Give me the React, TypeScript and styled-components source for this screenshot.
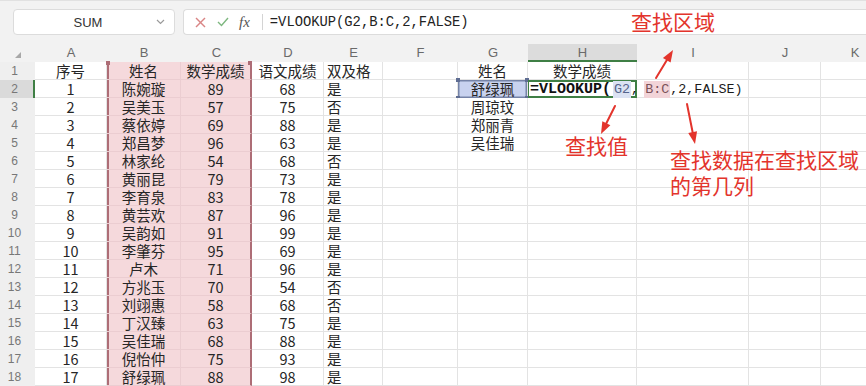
import React from "react";
import styled, { createGlobalStyle } from "styled-components";

const GlobalStyle = createGlobalStyle`
  html, body { margin: 0; padding: 0; }
  body {
    width: 866px;
    height: 386px;
    overflow: hidden;
    background: #f2f2f2;
    font-family: "Noto Sans CJK SC", "Noto Sans", sans-serif;
  }
`;

const RED = "#e3342c";
const GREEN = "#3f7f45";
const RANGE_EDGE = "#ad6d76";

const Page = styled.div`
  position: relative;
  width: 866px;
  height: 386px;
  overflow: hidden;
  display: flex;
  flex-direction: column;
  background: #f2f2f2;
`;

const TopStrip = styled.div`
  height: 4px;
  background: #ffffff;
  border-bottom: 1px solid #e1e1e1;
`;

const Toolbar = styled.div`
  display: flex;
  gap: 8px;
  margin-top: 8px;
  padding-left: 13px;
  height: 26px;
`;

const NameBox = styled.div`
  box-sizing: border-box;
  width: 162px;
  height: 26px;
  display: flex;
  align-items: center;
  background: #ffffff;
  border: 1px solid #dcdcdc;
  border-radius: 4px;
  padding-right: 9px;
`;

const NameText = styled.span`
  flex: 1;
  text-align: center;
  font: 13px "Liberation Sans", Arial, sans-serif;
  color: #333;
  padding-left: 6px;
`;

const FormulaBar = styled.div`
  box-sizing: border-box;
  flex: 1;
  height: 26px;
  display: flex;
  align-items: center;
  background: #ffffff;
  border: 1px solid #dcdcdc;
  border-right: none;
  border-radius: 4px 0 0 4px;
  padding-left: 11px;
`;

const IconSlot = styled.span`
  display: flex;
  align-items: center;
  margin-right: 11px;
`;

const Fx = styled.span`
  font: italic 15px "Liberation Serif", "DejaVu Serif", serif;
  color: #555;
  margin-left: -1px;
  margin-right: 12px;
`;

const Divider = styled.span`
  width: 1px;
  height: 16px;
  background: #d4d4d4;
  margin-right: 7px;
`;

const FormulaText = styled.span`
  font: 13.8px "Liberation Mono", "DejaVu Sans Mono", monospace;
  color: #222;
  white-space: nowrap;
`;

const Sheet = styled.div`
  display: grid;
  grid-template-columns: 35px 72px 74px 71px 72px 59px 75px 70px 109px 112px 72px 68px;
  grid-auto-rows: 18px;
  margin-top: 9px;
`;

const Corner = styled.div`
  display: flex;
  align-items: flex-end;
  justify-content: center;
  padding-bottom: 4px;
  box-sizing: border-box;
`;

const ColHead = styled.div<{ $active?: boolean }>`
  box-sizing: border-box;
  display: flex;
  align-items: center;
  justify-content: center;
  font: 13px "Liberation Sans", Arial, sans-serif;
  color: #6a6a6a;
  background: ${(p) => (p.$active ? "#dcdcdc" : "transparent")};
  border-bottom: 2px solid ${(p) => (p.$active ? GREEN : "transparent")};
`;

const RowHead = styled.div<{ $active?: boolean }>`
  box-sizing: border-box;
  display: flex;
  align-items: center;
  justify-content: center;
  padding-right: 4px;
  font: 12px "Liberation Sans", Arial, sans-serif;
  color: #777;
  background: ${(p) => (p.$active ? "#dadada" : "#efefef")};
  border-right: 2px solid ${(p) => (p.$active ? GREEN : "transparent")};
`;

type Range = "start" | "end";

const Cell = styled.div<{ $left?: boolean; $range?: Range; $top?: boolean }>`
  position: relative;
  box-sizing: border-box;
  background: ${(p) => (p.$range ? "#f5d9dc" : "#ffffff")};
  border-bottom: 1px solid ${(p) => (p.$range ? "#ebcdd1" : "#e3e3e3")};
  border-right: ${(p) =>
    p.$range === "end" ? `2px solid ${RANGE_EDGE}` : p.$range ? "1px solid #ebcdd1" : "1px solid #e3e3e3"};
  box-shadow: ${(p) => (p.$range === "start" ? `inset 2px 0 0 ${RANGE_EDGE}` : "none")};
  font: 14.5px/17px "Noto Sans CJK SC", "Noto Sans", sans-serif;
  color: #262626;
  text-align: ${(p) => (p.$left ? "left" : "center")};
  padding-left: ${(p) => (p.$left ? "3px" : "0")};
  white-space: nowrap;

  &::before {
    content: "";
    display: ${(p) => (p.$range && p.$top ? "block" : "none")};
    position: absolute;
    top: -1px;
    ${(p) => (p.$range === "start" ? "left: -1px;" : "right: -2px;")}
    width: 4px;
    height: 4px;
    background: ${RANGE_EDGE};
  }
`;

const SelectedCell = styled.div`
  position: relative;
  box-sizing: border-box;
  background: #c8d2ef;
  border-right: 1px solid #e3e3e3;
  box-shadow: inset 0 0 0 1.5px #7583a7;
  font: 14.5px/18px "Noto Sans CJK SC", "Noto Sans", sans-serif;
  color: #262626;
  text-align: center;
  white-space: nowrap;
`;

const Handle = styled.span<{ $r?: boolean; $b?: boolean }>`
  position: absolute;
  width: 4px;
  height: 4px;
  background: #5f6d92;
  ${(p) => (p.$r ? "right: -2px;" : "left: -2px;")}
  ${(p) => (p.$b ? "bottom: -2px;" : "top: -2px;")}
`;

const ActiveCell = styled.div`
  position: relative;
  z-index: 2;
  box-sizing: border-box;
  border: 2px solid ${GREEN};
  border-left-width: 1px;
  background: #ffffff;
  display: flex;
  align-items: center;
  padding-left: 1px;
  white-space: nowrap;
  font: 13.4px "Liberation Mono", "DejaVu Sans Mono", monospace;
  color: #1b1b1b;
`;

const FormulaHead = styled.span`
  font: bold 15px "Liberation Mono", "DejaVu Sans Mono", monospace;
  color: #111;
`;

const Caret = styled.span`
  display: inline-block;
  width: 1px;
  height: 15px;
  background: #222;
  margin: 0 1px;
`;

const Ref = styled.span<{ $kind: "blue" | "pink" }>`
  background: ${(p) => (p.$kind === "blue" ? "#dbe2f3" : "#f2d4d8")};
  color: ${(p) => (p.$kind === "blue" ? "#55648c" : "#7b5158")};
  padding: 1px 1px;
  margin-left: ${(p) => (p.$kind === "pink" ? "5px" : "0")};
`;

const Overlay = styled.svg`
  position: absolute;
  left: 0;
  top: 0;
  width: 866px;
  height: 386px;
  pointer-events: none;
  z-index: 5;
`;

const Note = styled.div<{ $x: number; $y: number }>`
  position: absolute;
  left: ${(p) => p.$x}px;
  top: ${(p) => p.$y}px;
  z-index: 6;
  font: 21px/26px "Noto Sans CJK SC", "Noto Sans", sans-serif;
  color: ${RED};
  white-space: nowrap;
`;

const COLS = ["A", "B", "C", "D", "E", "F", "G", "H", "I", "J", "K"];

const students: [number, string, number, number, string][] = [
  [1, "陈婉璇", 89, 68, "是"],
  [2, "吴美玉", 57, 75, "否"],
  [3, "蔡依婷", 69, 88, "是"],
  [4, "郑昌梦", 96, 63, "是"],
  [5, "林家纶", 54, 68, "否"],
  [6, "黄丽昆", 79, 73, "是"],
  [7, "李育泉", 83, 78, "是"],
  [8, "黄芸欢", 87, 96, "是"],
  [9, "吴韵如", 91, 99, "是"],
  [10, "李肇芬", 95, 69, "是"],
  [11, "卢木", 71, 96, "是"],
  [12, "方兆玉", 70, 54, "否"],
  [13, "刘翊惠", 58, 68, "否"],
  [14, "丁汉臻", 63, 75, "是"],
  [15, "吴佳瑞", 68, 88, "是"],
  [16, "倪怡仲", 75, 93, "是"],
  [17, "舒绿珮", 88, 98, "是"],
];

const lookupNames: Record<number, string> = { 3: "周琼玟", 4: "郑丽青", 5: "吴佳瑞" };

function Arrow({ x1, y1, x2, y2 }: { x1: number; y1: number; x2: number; y2: number }) {
  const dx = x2 - x1;
  const dy = y2 - y1;
  const len = Math.hypot(dx, dy);
  const ux = dx / len;
  const uy = dy / len;
  const hl = 12;
  const hw = 4.5;
  const bx = x2 - ux * hl;
  const by = y2 - uy * hl;
  const px = -uy;
  const py = ux;
  const pts = `${x2},${y2} ${bx + px * hw},${by + py * hw} ${bx - px * hw},${by - py * hw}`;
  return (
    <g>
      <line x1={x1} y1={y1} x2={bx + ux * 2} y2={by + uy * 2} stroke={RED} strokeWidth={2} strokeLinecap="round" />
      <polygon points={pts} fill={RED} />
    </g>
  );
}

function Row({ n }: { n: number }) {
  const s = n >= 2 ? students[n - 2] : null;
  const isHeader = n === 1;
  const cells: React.ReactNode[] = [];
  cells.push(
    <RowHead key="h" $active={n === 2}>
      {n}
    </RowHead>
  );
  cells.push(<Cell key="A">{isHeader ? "序号" : s?.[0]}</Cell>);
  cells.push(
    <Cell key="B" $range="start" $top={isHeader}>
      {isHeader ? "姓名" : s?.[1]}
    </Cell>
  );
  cells.push(
    <Cell key="C" $range="end" $top={isHeader}>
      {isHeader ? "数学成绩" : s?.[2]}
    </Cell>
  );
  cells.push(<Cell key="D">{isHeader ? "语文成绩" : s?.[3]}</Cell>);
  cells.push(
    <Cell key="E" $left>
      {isHeader ? "双及格" : s?.[4]}
    </Cell>
  );
  cells.push(<Cell key="F" />);
  if (n === 2) {
    cells.push(
      <SelectedCell key="G">
        舒绿珮
        <Handle />
        <Handle $r />
        <Handle $b />
        <Handle $r $b />
      </SelectedCell>
    );
    cells.push(
      <ActiveCell key="H">
        <FormulaHead>=VLOOKUP(</FormulaHead>
        <Caret />
        <Ref $kind="blue">G2</Ref>,<Ref $kind="pink">B:C</Ref>,2,FALSE)
      </ActiveCell>
    );
  } else {
    cells.push(<Cell key="G">{isHeader ? "姓名" : lookupNames[n] ?? ""}</Cell>);
    cells.push(<Cell key="H">{isHeader ? "数学成绩" : ""}</Cell>);
  }
  cells.push(<Cell key="I" />);
  cells.push(<Cell key="J" />);
  cells.push(<Cell key="K" />);
  return <>{cells}</>;
}

export default function App() {
  const rows = Array.from({ length: 18 }, (_, i) => i + 1);
  return (
    <Page>
      <GlobalStyle />
      <TopStrip />
      <Toolbar>
        <NameBox>
          <NameText>SUM</NameText>
          <svg width="9" height="6" viewBox="0 0 9 6">
            <polyline points="1,1 4.5,4.5 8,1" fill="none" stroke="#9a9a9a" strokeWidth="1.2" />
          </svg>
        </NameBox>
        <FormulaBar>
          <IconSlot>
            <svg width="11" height="11" viewBox="0 0 11 11">
              <line x1="1" y1="1" x2="10" y2="10" stroke="#d98585" strokeWidth="1.4" />
              <line x1="10" y1="1" x2="1" y2="10" stroke="#d98585" strokeWidth="1.4" />
            </svg>
          </IconSlot>
          <IconSlot>
            <svg width="12" height="10" viewBox="0 0 12 10">
              <polyline points="1,5 4.5,8.5 11,1" fill="none" stroke="#7db77f" strokeWidth="1.4" />
            </svg>
          </IconSlot>
          <Fx>fx</Fx>
          <Divider />
          <FormulaText>=VLOOKUP(G2,B:C,2,FALSE)</FormulaText>
        </FormulaBar>
      </Toolbar>
      <Sheet>
        <Corner>
          <svg width="6" height="6" viewBox="0 0 6 6">
            <polygon points="6,0 6,6 0,6" fill="#a8a8a8" />
          </svg>
        </Corner>
        {COLS.map((c) => (
          <ColHead key={c} $active={c === "H"}>
            {c}
          </ColHead>
        ))}
        {rows.map((n) => (
          <Row key={n} n={n} />
        ))}
      </Sheet>

      <Overlay viewBox="0 0 866 386">
        <Arrow x1={656} y1={78} x2={673} y2={50} />
        <Arrow x1={615} y1={106} x2={601} y2={134} />
        <Arrow x1={687} y1={104} x2={695} y2={144} />
      </Overlay>
      <Note $x={631} $y={8}>查找区域</Note>
      <Note $x={565} $y={132}>查找值</Note>
      <Note $x={670} $y={146}>
        查找数据在查找区域
        <br />
        的第几列
      </Note>
    </Page>
  );
}
